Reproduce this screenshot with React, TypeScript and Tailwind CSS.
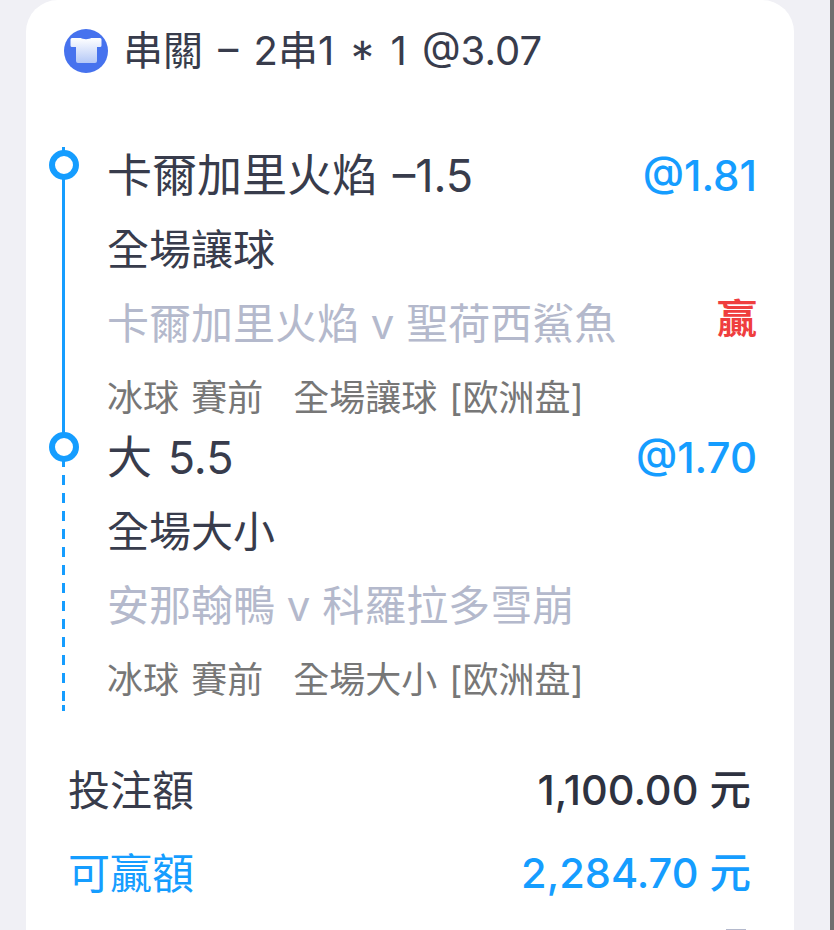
function ShirtBadge() {
  return (
    <svg width="44" height="44" viewBox="0 0 44 44" className="shrink-0">
      <defs>
        <linearGradient id="shirt" x1="0" y1="0" x2="0" y2="1">
          <stop offset="0%" stopColor="#ffffff" />
          <stop offset="100%" stopColor="#b4c8f7" />
        </linearGradient>
      </defs>
      <circle cx="22" cy="22" r="22" fill="#4672ee" />
      <path
        d="M8 9h9c1 1.500 9 1.500 10 0h9a1.500 1.500 0 0 1 1.500 1.500v6a1.500 1.500 0 0 1-1.500 1.500h-3v14a2 2 0 0 1-2 2H14a2 2 0 0 1-2-2V18H8a1.500 1.500 0 0 1-1.500-1.500v-6A1.500 1.500 0 0 1 8 9z"
        fill="url(#shirt)"
      />
    </svg>
  );
}

interface Leg {
  pick: string;
  odds: string;
  market: string;
  match: string;
  info: string;
  won?: boolean;
}

const legs: Leg[] = [
  { pick: '卡爾加里火焰 –1.5', odds: '@1.81', market: '全場讓球', match: '卡爾加里火焰 v 聖荷西鯊魚', info: '全場讓球 [欧洲盘]', won: true },
  { pick: '大 5.5', odds: '@1.70', market: '全場大小', match: '安那翰鴨 v 科羅拉多雪崩', info: '全場大小 [欧洲盘]' },
];

function LegRow({ leg, last }: { leg: Leg; last: boolean }) {
  return (
    <div className="relative h-[282px] pl-[81px] pr-[37px]">
      {last ? (
        <>
          <div className="absolute left-[36px] top-[24px] bottom-[14px] w-[3px] bg-[repeating-linear-gradient(to_bottom,#159dff_0,#159dff_10px,transparent_10px,transparent_18px)]" />
          <div className="absolute left-[36px] bottom-[4px] h-[6px] w-[3px] bg-[#159dff]" />
        </>
      ) : (
        <div className="absolute left-[36px] top-[-4px] bottom-[-4px] w-[3px] bg-[#159dff]" />
      )}
      <div className="absolute left-[23px] top-[-1px] w-[30px] h-[30px] rounded-full border-[6px] border-[#159dff] bg-white" />
      <div className="flex justify-between items-center pt-[3px] h-[46px] text-[45px] leading-[46px] text-[#383c4c] [word-spacing:3px]">
        <span>{leg.pick}</span>
        <span className="text-[#159dff] text-[42px] font-medium">{leg.odds}</span>
      </div>
      <div className="mt-[33px] h-[40px] text-[42px] leading-[40px] text-[#383c4c]">{leg.market}</div>
      <div className="mt-[32px] flex justify-between items-center h-[44px] text-[42px] leading-[44px] text-[#b4b9cc]">
        <span>{leg.match}</span>
        {leg.won && <span className="text-[#ef3e3e] font-bold text-[40px] -translate-y-[5px]">贏</span>}
      </div>
      <div className="mt-[34px] flex h-[36px] text-[36px] leading-[36px] text-[#777777] [word-spacing:2px]">
        <span>冰球 賽前</span>
        <span className="ml-[30px]">{leg.info}</span>
      </div>
    </div>
  );
}

export default function App() {
  return (
    <div className="h-[930px] w-[834px] overflow-hidden bg-[#f0f0f5] flex font-['Inter','Noto_Sans_CJK_TC',sans-serif]">
      <div className="ml-[26px] w-[768px] h-[990px] bg-white rounded-t-[32px]">
        <div className="flex items-center h-[100px] pl-[38px] pt-[2px]">
          <ShirtBadge />
          <span className="ml-[15px] text-[40px] text-[#383c4c] [word-spacing:4px]">串關 – 2串1 * 1 @3.07</span>
        </div>
        <div className="mt-[51px]">
          {legs.map((leg, i) => (
            <LegRow key={leg.odds} leg={leg} last={i === legs.length - 1} />
          ))}
        </div>
        <div className="mt-[52px] pl-[42px] pr-[43px]">
          <div className="flex justify-between items-center h-[46px] text-[#2e3240]">
            <span className="text-[42px] text-[#383c4c]">投注額</span>
            <span className="text-[41.500px] font-medium">1,100.00 元</span>
          </div>
          <div className="mt-[37px] flex justify-between items-center h-[46px] text-[#159dff]">
            <span className="text-[42px]">可贏額</span>
            <span className="text-[41.500px] font-medium">2,284.70 元</span>
          </div>
          <div className="mt-[33px] ml-auto mr-[5px] w-[20px] h-[4px] bg-[#b4b9cc]" />
        </div>
      </div>
      <div className="ml-auto w-[4px] h-[930px] bg-[#6f6f6f]" />
    </div>
  );
}
